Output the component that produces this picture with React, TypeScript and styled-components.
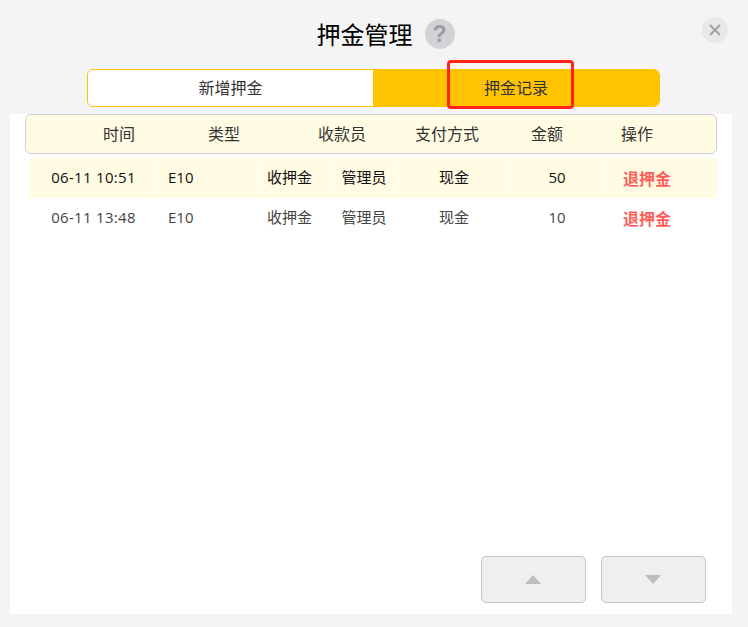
import React from 'react'
import styled, { createGlobalStyle } from 'styled-components'

const fontStack = '"Open Sans", "Noto Sans CJK SC", sans-serif'

const GlobalStyle = createGlobalStyle`
  html, body {
    margin: 0;
    padding: 0;
    background: #f4f4f4;
    font-family: ${fontStack};
  }
`

const Page = styled.div`
  position: relative;
  width: 748px;
  height: 627px;
  overflow: hidden;
  background: #f4f4f4;
  display: flex;
  flex-direction: column;
`

const TitleBar = styled.div`
  height: 69px;
  position: relative;
  display: flex;
  justify-content: center;
  align-items: flex-start;
  padding: 19px 0 0 23px;
  box-sizing: border-box;
  gap: 12px;
`

const Title = styled.h1`
  margin: 0;
  font-size: 24px;
  line-height: 32px;
  font-weight: 400;
  color: #000;
`

const HelpBadge = styled.span`
  width: 30px;
  height: 30px;
  border-radius: 50%;
  background: #d3d3d6;
  color: #9a9aa8;
  font-family: "Liberation Sans", sans-serif;
  font-size: 23px;
  font-weight: 700;
  line-height: 30px;
  text-align: center;
`

const CloseButton = styled.button`
  position: absolute;
  top: 17px;
  right: 20px;
  width: 26px;
  height: 26px;
  padding: 0;
  border: none;
  border-radius: 50%;
  background: #e8e8e8;
  display: flex;
  align-items: center;
  justify-content: center;
`

const Tabs = styled.div`
  width: 573px;
  height: 38px;
  margin-left: 87px;
  box-sizing: border-box;
  border: 1px solid #ffc300;
  border-radius: 6px;
  overflow: hidden;
  display: flex;
`

const Tab = styled.div<{ $active?: boolean }>`
  flex: ${p => (p.$active ? '1' : '0 0 285px')};
  text-align: center;
  font-size: 16px;
  line-height: 36px;
  color: #333;
  background: ${p => (p.$active ? '#ffc300' : '#fff')};
`

const Panel = styled.div`
  width: 722px;
  height: 500px;
  margin: 7px 0 0 10px;
  background: #fff;
  position: relative;
  display: flex;
  flex-direction: column;
  padding: 0 15px;
  box-sizing: border-box;
`

const columns = '104px 106px 130px 80px 120px 60px'

const HeaderRow = styled.div`
  height: 40px;
  box-sizing: border-box;
  background: #fffce3;
  border: 1px solid #cfcfcf;
  border-radius: 6px;
  padding-left: 41px;
  display: grid;
  grid-template-columns: ${columns};
  align-items: center;
`

const HeaderCell = styled.div`
  text-align: center;
  font-size: 16px;
  line-height: 38px;
  color: #333;
`

const Rows = styled.div`
  margin: 4px 0 0 4px;
  display: flex;
  flex-direction: column;
  flex: 1;
`

const Row = styled.div<{ $highlight?: boolean }>`
  height: 40px;
  display: grid;
  grid-template-columns: 130px 101px 70px 69px 111px 95px 1fr;
  background: ${p => (p.$highlight ? '#fffce3' : '#fff')};
  color: ${p => (p.$highlight ? '#111' : '#444')};
`

const Cell = styled.div<{ $align?: string; $pad?: number; $spacing?: number }>`
  font-size: 15px;
  line-height: 38px;
  text-align: ${p => p.$align || 'center'};
  padding-left: ${p => p.$pad || 0}px;
  letter-spacing: ${p => p.$spacing || 0}px;
  white-space: nowrap;
  border-right: 1px dashed #fff;
`

const RefundLink = styled.a`
  font-size: 16px;
  font-weight: 700;
  line-height: 42px;
  color: #ff5f5a;
  padding-left: 18px;
  white-space: nowrap;
`

const Pager = styled.div`
  position: absolute;
  right: 26px;
  bottom: 11px;
  display: flex;
  gap: 15px;
`

const PageButton = styled.button`
  width: 105px;
  height: 47px;
  padding: 0 1px 0 0;
  box-sizing: border-box;
  background: #efefef;
  border: 1px solid #c4c4c4;
  border-radius: 5px;
  display: flex;
  align-items: center;
  justify-content: center;
`

// annotation drawn on top of the screenshot
const Highlight = styled.div`
  position: absolute;
  left: 447px;
  top: 60px;
  width: 127px;
  height: 49px;
  box-sizing: border-box;
  border: 3px solid #ff2318;
  border-radius: 4px;
`

const records = [
  { time: '06-11 10:51', amount: 50 },
  { time: '06-11 13:48', amount: 10 },
]

export default function App() {
  return (
    <Page>
      <GlobalStyle />
      <TitleBar>
        <Title>押金管理</Title>
        <HelpBadge>?</HelpBadge>
        <CloseButton aria-label="close">
          <svg width="14" height="14" viewBox="0 0 14 14">
            <path d="M2 2L12 12M12 2L2 12" stroke="#a3a3a3" strokeWidth="2" />
          </svg>
        </CloseButton>
      </TitleBar>
      <Tabs>
        <Tab>新增押金</Tab>
        <Tab $active>押金记录</Tab>
      </Tabs>
      <Panel>
        <HeaderRow>
          <HeaderCell>时间</HeaderCell>
          <HeaderCell>类型</HeaderCell>
          <HeaderCell>收款员</HeaderCell>
          <HeaderCell>支付方式</HeaderCell>
          <HeaderCell>金额</HeaderCell>
          <HeaderCell>操作</HeaderCell>
        </HeaderRow>
        <Rows>
          {records.map((r, i) => (
            <Row key={r.time} $highlight={i === 0}>
              <Cell $spacing={0.3}>{r.time}</Cell>
              <Cell $align="left" $pad={9}>E10</Cell>
              <Cell $align="left" $pad={7}>收押金</Cell>
              <Cell>管理员</Cell>
              <Cell>现金</Cell>
              <Cell>{r.amount}</Cell>
              <RefundLink>退押金</RefundLink>
            </Row>
          ))}
        </Rows>
        <Pager>
          <PageButton aria-label="up">
            <svg width="16" height="9" viewBox="0 0 16 9">
              <path d="M8 0L16 9H0Z" fill="#bdbdbd" />
            </svg>
          </PageButton>
          <PageButton aria-label="down">
            <svg width="16" height="9" viewBox="0 0 16 9">
              <path d="M0 0H16L8 9Z" fill="#bdbdbd" />
            </svg>
          </PageButton>
        </Pager>
      </Panel>
      <Highlight />
    </Page>
  )
}
